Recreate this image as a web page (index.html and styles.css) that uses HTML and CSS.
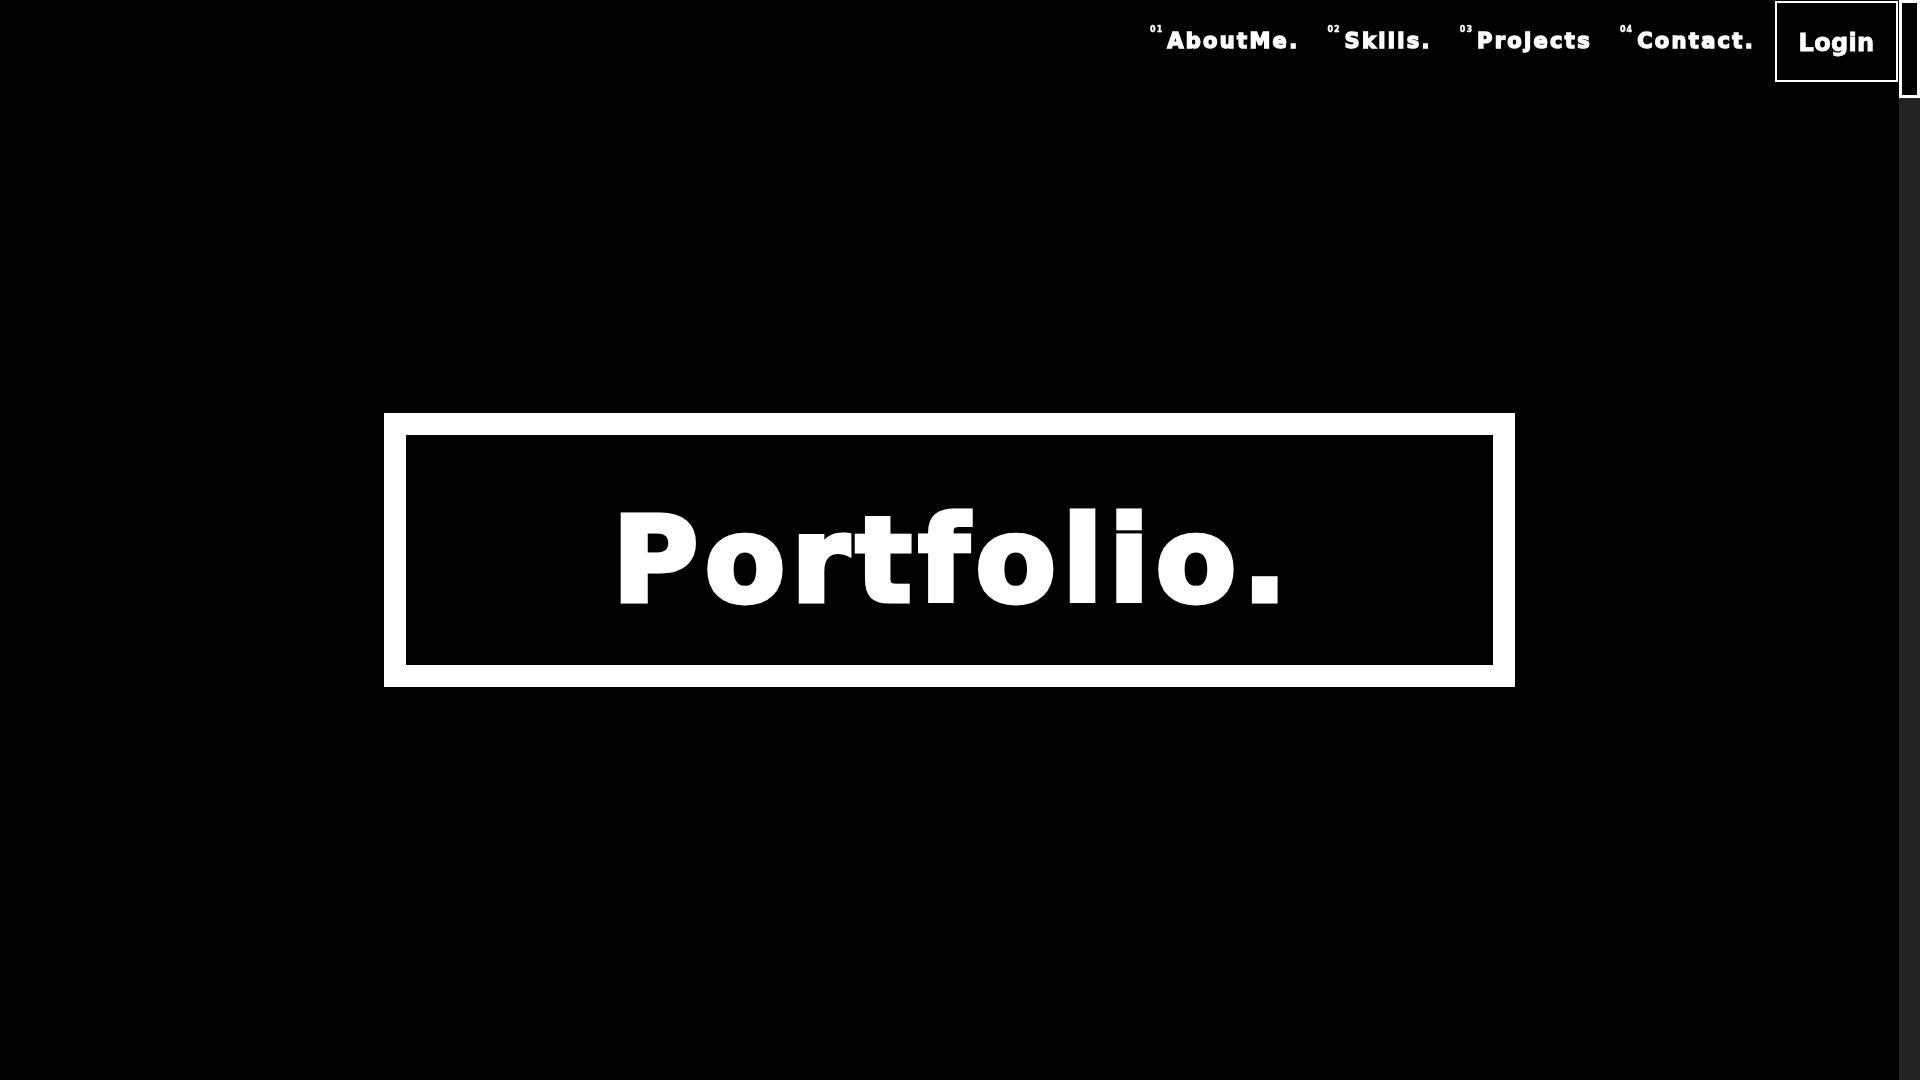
FILE: index.html
```html
<!DOCTYPE html>
<html lang="en">
<head>
<meta charset="utf-8">
<title>Portfolio.</title>
<link rel="stylesheet" href="styles.css">
</head>
<body>
<header class="site-header">
  <nav class="nav">
    <a class="nav-link" href="#about"><sup class="nav-num">01</sup><span class="nav-label">AboutMe.</span></a>
    <a class="nav-link" href="#skills"><sup class="nav-num">02</sup><span class="nav-label">Skills.</span></a>
    <a class="nav-link" href="#projects"><sup class="nav-num">03</sup><span class="nav-label">Projects</span></a>
    <a class="nav-link" href="#contact"><sup class="nav-num">04</sup><span class="nav-label">Contact.</span></a>
  </nav>
  <a class="login" href="#login">Login</a>
</header>
<div class="scrollbar" aria-hidden="true"><div class="scrollbar-thumb"></div></div>
<main class="page">
  <section class="hero">
    <div class="hero-frame">
      <h1 class="hero-title">Portfolio.</h1>
    </div>
  </section>
</main>
</body>
</html>
```
FILE: styles.css
```css
html, body {
  margin: 0;
  padding: 0;
  background: #000;
  color: #fff;
  overflow: hidden;
}

body {
  font-family: "DejaVu Sans", "Liberation Sans", sans-serif;
}

.page {
  padding-right: 21px;
}

/* custom scrollbar drawn over the right edge */
.scrollbar {
  position: fixed;
  top: 0;
  right: 0;
  bottom: 0;
  width: 21px;
  background: #232323;
  z-index: 20;
}

.scrollbar-thumb {
  box-sizing: border-box;
  height: 98px;
  background: #000;
  border: 3px solid #fff;
}

.site-header {
  position: fixed;
  top: 0;
  left: 0;
  right: 21px;
  z-index: 10;
  display: flex;
  justify-content: flex-end;
  align-items: flex-start;
  padding: 1px 1px 0 0;
}

.nav {
  display: flex;
  align-items: flex-start;
  gap: 28px;
  margin: 25px 20px 0 0;
}

.nav-link {
  display: flex;
  align-items: flex-start;
  color: #fff;
  text-decoration: none;
}

.nav-num {
  font-size: 8px;
  font-weight: 700;
  line-height: 1;
  letter-spacing: 1px;
  margin-right: 4px;
  -webkit-text-stroke: 0.4px #fff;
}

.nav-label {
  font-size: 21px;
  font-weight: 700;
  letter-spacing: 2.3px;
  line-height: 1;
  margin-top: 5px;
  -webkit-text-stroke: 1.4px #fff;
}

.login {
  display: flex;
  align-items: center;
  justify-content: center;
  box-sizing: border-box;
  width: 123px;
  height: 81px;
  padding-top: 3px;
  border: 2px solid #fff;
  color: #fff;
  text-decoration: none;
  font-weight: 700;
  font-size: 24px;
  letter-spacing: 0.3px;
  -webkit-text-stroke: 0.8px #fff;
}

.hero {
  box-sizing: border-box;
  height: 100vh;
  padding-top: 20px;
  display: flex;
  align-items: center;
  justify-content: center;
}

.hero-frame {
  box-sizing: border-box;
  width: 1131px;
  height: 274px;
  border: 22px solid #fff;
  display: flex;
  align-items: center;
  justify-content: center;
}

.hero-title {
  margin: 0;
  padding: 20px 0 0 7px;
  font-size: 117px;
  font-weight: 700;
  line-height: 1;
  letter-spacing: 6.5px;
  -webkit-text-stroke: 5px #fff;
}
```
